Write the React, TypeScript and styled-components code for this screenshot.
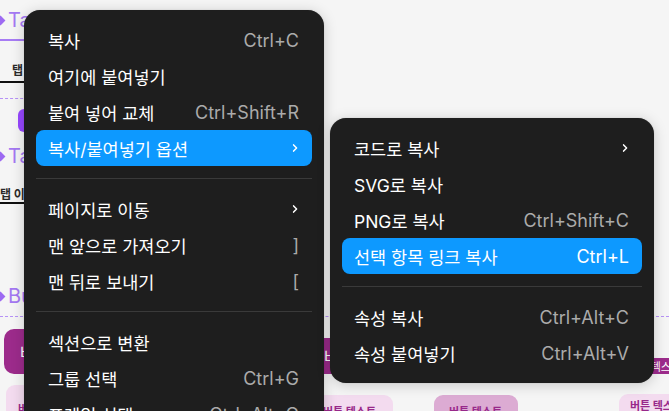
import React from 'react'
import styled, {createGlobalStyle} from 'styled-components'

type MenuEntry =
    | {kind: 'item', label: string, shortcut?: string, sub?: boolean, active?: boolean}
    | {kind: 'sep'}

const mainMenu: MenuEntry[] = [
    {kind: 'item', label: '복사', shortcut: 'Ctrl+C'},
    {kind: 'item', label: '여기에 붙여넣기'},
    {kind: 'item', label: '붙여 넣어 교체', shortcut: 'Ctrl+Shift+R'},
    {kind: 'item', label: '복사/붙여넣기 옵션', sub: true, active: true},
    {kind: 'sep'},
    {kind: 'item', label: '페이지로 이동', sub: true},
    {kind: 'item', label: '맨 앞으로 가져오기', shortcut: ']'},
    {kind: 'item', label: '맨 뒤로 보내기', shortcut: '['},
    {kind: 'sep'},
    {kind: 'item', label: '섹션으로 변환'},
    {kind: 'item', label: '그룹 선택', shortcut: 'Ctrl+G'},
    {kind: 'item', label: '프레임 선택', shortcut: 'Ctrl+Alt+G'},
]

const subMenu: MenuEntry[] = [
    {kind: 'item', label: '코드로 복사', sub: true},
    {kind: 'item', label: 'SVG로 복사'},
    {kind: 'item', label: 'PNG로 복사', shortcut: 'Ctrl+Shift+C'},
    {kind: 'item', label: '선택 항목 링크 복사', shortcut: 'Ctrl+L', active: true},
    {kind: 'sep'},
    {kind: 'item', label: '속성 복사', shortcut: 'Ctrl+Alt+C'},
    {kind: 'item', label: '속성 붙여넣기', shortcut: 'Ctrl+Alt+V'},
]

const Chevron = () => (
    <svg width="8" height="10" viewBox="0 0 8 10">
        <path d="M2.6 1.9 L5.6 5 L2.6 8.1" fill="none" stroke="#fff" strokeWidth="1.5" strokeLinecap="round" strokeLinejoin="round"/>
    </svg>
)

const MenuList = ({entries}: {entries: MenuEntry[]}) => (
    <>
        {entries.map((e, i) =>
            e.kind === 'sep' ? (
                <Separator key={i}/>
            ) : (
                <Item key={i} $active={!!e.active}>
                    <Label>{e.label}</Label>
                    {e.shortcut && <Shortcut $active={!!e.active}>{e.shortcut}</Shortcut>}
                    {e.sub && <Chevron/>}
                </Item>
            )
        )}
    </>
)

const App = () => {
    return (
        <>
            <GlobalStyle/>
            <Canvas>
                {/* design canvas behind the context menus */}
                <Board>
                    <SetLabel $top={8}><Diamond/>Tabs</SetLabel>
                    <SetFrame>
                        <TabCell $top={21} $left={10}>탭</TabCell>
                    </SetFrame>
                    <DashLine $top={15} $width={280}/>
                    <PurpleChip/>
                    <SetLabel $top={12}><Diamond/>Tab item</SetLabel>
                    <TabCell $top={18} $left={-3}>탭 이름</TabCell>
                    <SetLabel $top={80}><Diamond/>Button</SetLabel>
                    <DashLine $top={8} $width={669}/>

                    <ButtonRow $top={11} $height={46}>
                        <SolidBtn $width={140} $height={45} $pad={16} $ml={4}>버튼 텍스트</SolidBtn>
                        <SolidBtn $width={140} $height={36} $pad={104} $ml={76}>버튼</SolidBtn>
                        <SolidBtn $width={80} $height={16} $pad={8} $ml={260} $small>버튼 텍스트</SolidBtn>
                    </ButtonRow>
                    <ButtonRow $top={11} $height={40}>
                        <SoftBtn $width={110} $height={40} $ml={6} $pad={12} $padTop={16}>버튼 텍스트</SoftBtn>
                        <SoftBtn $width={97} $height={30} $ml={180} $pad={27} $padTop={9}>버튼 텍스트</SoftBtn>
                        <SoftBtn $width={84} $height={30} $ml={41} $pad={15} $padTop={9} $mid>버튼 텍스트</SoftBtn>
                        <SoftBtn $width={90} $height={31} $ml={101} $pad={11} $padTop={4}>버튼 텍스트</SoftBtn>
                    </ButtonRow>
                </Board>

                <Menu $left={24} $top={10} $width={300}>
                    <MenuList entries={mainMenu}/>
                </Menu>
                <Menu $left={330} $top={118} $width={324}>
                    <MenuList entries={subMenu}/>
                </Menu>
            </Canvas>
        </>
    )
}

export default App

const GlobalStyle = createGlobalStyle`
    html, body {
        margin: 0;
        padding: 0;
        background: #f5f5f5;
        overflow: hidden;
    }
`

const Canvas = styled.div`
    position: relative;
    width: 669px;
    height: 411px;
    overflow: hidden;
    background: #f5f5f5;
    font-family: Inter, 'Noto Sans CJK KR', sans-serif;
`

const Board = styled.div`
    display: flex;
    flex-direction: column;
    align-items: flex-start;
`

const SetLabel = styled.div<{$top: number}>`
    margin: ${p => p.$top}px 0 0 -3px;
    height: 24px;
    display: flex;
    align-items: center;
    gap: 4px;
    font-size: 20px;
    line-height: 24px;
    color: #a478f2;
    white-space: nowrap;
`

const Diamond = styled.span`
    width: 7px;
    height: 7px;
    background: #9d6af2;
    transform: rotate(45deg);
`

const SetFrame = styled.div`
    margin-top: 7px;
    width: 60px;
    border-top: 2px solid #a77cf4;
`

const DashLine = styled.div<{$top: number, $width: number}>`
    margin-top: ${p => p.$top}px;
    width: ${p => p.$width}px;
    border-top: 1.5px dashed #b692f6;
`

const TabCell = styled.div<{$top: number, $left: number}>`
    margin-top: ${p => p.$top}px;
    padding: 0 0 3px ${p => p.$left + 2}px;
    width: 60px;
    border-bottom: 2px solid #111;
    font-family: 'Noto Sans CJK KR', sans-serif;
    font-size: 12px;
    font-weight: 700;
    line-height: 16px;
    color: #2a2a2a;
    white-space: nowrap;
`

const PurpleChip = styled.div`
    margin: 10px 0 0 18px;
    width: 40px;
    height: 23px;
    border-radius: 6px;
    background: #9747ff;
`

const ButtonRow = styled.div<{$top: number, $height: number}>`
    margin-top: ${p => p.$top}px;
    height: ${p => p.$height}px;
    display: flex;
    align-items: flex-end;
`

const SolidBtn = styled.div<{$width: number, $height: number, $pad: number, $ml: number, $small?: boolean}>`
    flex: none;
    box-sizing: border-box;
    width: ${p => p.$width}px;
    height: ${p => p.$height}px;
    margin-left: ${p => p.$ml}px;
    padding-left: ${p => p.$pad}px;
    display: flex;
    align-items: center;
    border-radius: ${p => p.$small ? 4 : 10}px;
    background: #9c2b8b;
    color: #fff;
    font-family: 'Noto Sans CJK KR', sans-serif;
    font-size: ${p => p.$small ? 11 : 16}px;
    white-space: nowrap;
    overflow: hidden;
`

const SoftBtn = styled.div<{$width: number, $height: number, $pad: number, $padTop: number, $ml: number, $mid?: boolean}>`
    flex: none;
    box-sizing: border-box;
    align-self: flex-start;
    margin-top: ${p => 40 - p.$height}px;
    width: ${p => p.$width}px;
    height: ${p => p.$height}px;
    margin-left: ${p => p.$ml}px;
    padding: ${p => p.$padTop}px 0 0 ${p => p.$pad}px;
    border-radius: 9px;
    background: ${p => p.$mid ? '#dcabd3' : '#f3dbef'};
    color: #98288a;
    font-family: 'Noto Sans CJK KR', sans-serif;
    font-size: 11px;
    font-weight: 700;
    line-height: 14px;
    white-space: nowrap;
    overflow: hidden;
`

const Menu = styled.div<{$left: number, $top: number, $width: number}>`
    position: absolute;
    left: ${p => p.$left}px;
    top: ${p => p.$top}px;
    width: ${p => p.$width}px;
    box-sizing: border-box;
    padding: 12px 0;
    display: flex;
    flex-direction: column;
    background: #1e1e1e;
    border-radius: 16px;
    box-shadow: 0 2px 14px rgba(0, 0, 0, 0.18), 0 0 1px rgba(0, 0, 0, 0.3);
    font-family: Inter, 'Noto Sans CJK KR', sans-serif;
    color: #fff;
`

const Item = styled.div<{$active: boolean}>`
    height: 36px;
    margin: 0 12px;
    padding: 0 13px 0 12px;
    display: flex;
    align-items: center;
    justify-content: space-between;
    border-radius: 8px;
    background: ${p => p.$active ? '#0d99ff' : 'transparent'};
    white-space: nowrap;
`

const Label = styled.span`
    font-size: 17.5px;
`

const Shortcut = styled.span<{$active: boolean}>`
    font-size: 18px;
    color: ${p => p.$active ? '#fff' : '#ababab'};
`

const Separator = styled.div`
    height: 1px;
    margin: 12px 12px;
    background: #3a3a3a;
`
